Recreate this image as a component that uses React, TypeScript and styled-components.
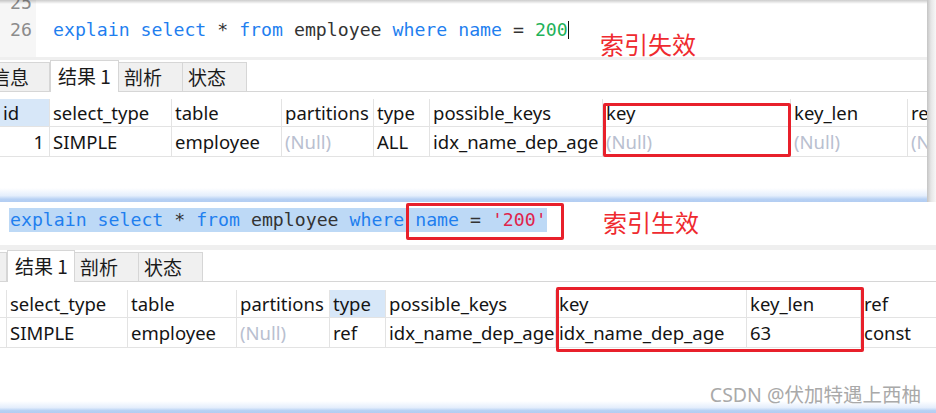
import React from 'react';
import styled, { createGlobalStyle } from 'styled-components';

const GlobalStyle = createGlobalStyle`
  html, body {
    margin: 0;
    padding: 0;
    background: #ffffff;
  }
  body {
    width: 936px;
    height: 413px;
    overflow: hidden;
  }
  * {
    box-sizing: border-box;
  }
`;

const Page = styled.div`
  width: 936px;
  height: 413px;
  display: flex;
  flex-direction: column;
  overflow: hidden;
  background: #fff;
`;

const Shot = styled.div<{ $height: number }>`
  display: flex;
  flex-shrink: 0;
  height: ${(p) => p.$height}px;
`;

const Window = styled.div`
  position: relative;
  flex: 1;
  min-width: 0;
  display: flex;
  flex-direction: column;
  overflow: hidden;
  background: #fff;
`;

const RightShade = styled.div`
  width: 9px;
  flex-shrink: 0;
  background: linear-gradient(to right, #c4c4c4, #e6e6e6 45%, #f7f7f7);
`;

const Glow = styled.div<{ $height: number }>`
  margin-top: auto;
  height: ${(p) => p.$height}px;
  flex-shrink: 0;
  background: linear-gradient(
    to bottom,
    rgba(183, 209, 244, 0) 0%,
    #e4eefc 55%,
    #b7d1f4 80%,
    #b3cdf2 100%
  );
`;

/* editor */

const Editor = styled.div<{ $height: number; $shade?: boolean }>`
  position: relative;
  display: flex;
  height: ${(p) => p.$height}px;
  flex-shrink: 0;
  overflow: hidden;
  font-family: 'DejaVu Sans Mono', 'Liberation Mono', monospace;
  font-size: 18.2px;

  &::after {
    content: '';
    display: ${(p) => (p.$shade ? 'block' : 'none')};
    position: absolute;
    left: 0;
    right: 0;
    top: 0;
    height: 4px;
    background: linear-gradient(rgba(0, 0, 0, 0.2), rgba(0, 0, 0, 0));
  }
`;

const Gutter = styled.div`
  width: 36px;
  flex-shrink: 0;
  background: #f6f6f6;
  color: #8c8c8c;
  text-align: right;
  padding-right: 4px;
`;

const Lines = styled.div<{ $shift: number; $pad: number }>`
  flex: 1;
  margin-top: ${(p) => p.$shift}px;
  padding-left: ${(p) => p.$pad}px;
  white-space: pre;
`;

const GutterLines = styled.div<{ $shift: number }>`
  margin-top: ${(p) => p.$shift}px;
`;

const Line = styled.div<{ $height: number }>`
  height: ${(p) => p.$height}px;
  line-height: ${(p) => p.$height}px;
`;

const Selection = styled.span`
  display: inline-block;
  height: 24px;
  line-height: 24px;
  padding-left: 1px;
  background: #bdd9f6;
`;

type TokenKind = 'kw' | 'id' | 'op' | 'num' | 'str';

const tokenColor: Record<TokenKind, string> = {
  kw: '#1f7fef',
  id: '#333333',
  op: '#333333',
  num: '#1fb25a',
  str: '#e0244c',
};

const Tok = styled.span<{ $kind: TokenKind }>`
  color: ${(p) => tokenColor[p.$kind]};
`;

const Caret = styled.span`
  display: inline-block;
  width: 1px;
  height: 18px;
  background: #111;
  vertical-align: -3px;
`;

const Band = styled.div<{ $height: number }>`
  height: ${(p) => p.$height}px;
  flex-shrink: 0;
  background: #efefef;
`;

/* tabs */

const TabBar = styled.div<{ $lead: number }>`
  display: flex;
  align-items: flex-end;
  height: 32px;
  flex-shrink: 0;
  border-bottom: 1px solid #d6d6d6;
  font-family: 'Noto Sans CJK SC', 'Noto Sans', sans-serif;
  font-size: 19px;
  color: #1a1a1a;

  & > :first-child {
    margin-left: ${(p) => p.$lead}px;
  }
`;

const Tab = styled.div<{ $active?: boolean; $width: number }>`
  width: ${(p) => p.$width}px;
  flex-shrink: 0;
  height: ${(p) => (p.$active ? 32 : 29)}px;
  margin-bottom: ${(p) => (p.$active ? -1 : 0)}px;
  padding-left: ${(p) => (p.$active ? 7 : 5)}px;
  line-height: ${(p) => (p.$active ? 29 : 27)}px;
  border: 1px solid #d6d6d6;
  border-bottom: 0;
  border-left-width: ${(p) => (p.$active ? 1 : 0)}px;
  background: ${(p) => (p.$active ? '#ffffff' : '#f0f0f0')};
  white-space: nowrap;
  overflow: hidden;
`;

/* result grid */

const Grid = styled.div<{ $cols: string; $offset: number; $gap: number }>`
  display: grid;
  grid-template-columns: ${(p) => p.$cols};
  margin-left: ${(p) => p.$offset}px;
  margin-top: ${(p) => p.$gap}px;
  font-family: 'Noto Sans', 'Noto Sans CJK SC', sans-serif;
  font-size: 18.5px;
  color: #141414;
`;

const HeadCell = styled.div<{ $selected?: boolean }>`
  height: 28px;
  line-height: 28px;
  padding: 0 3px;
  border-right: 1px solid #e3e3e3;
  border-bottom: 1px solid #e3e3e3;
  background: ${(p) => (p.$selected ? '#d7e7f8' : '#ffffff')};
  white-space: nowrap;
  overflow: hidden;
`;

const Cell = styled.div<{ $muted?: boolean; $right?: boolean }>`
  height: 30px;
  line-height: 30px;
  padding: 0 ${(p) => (p.$right ? 5 : 3)}px 0 3px;
  border-right: 1px solid #e3e3e3;
  border-bottom: 1px solid #e3e3e3;
  color: ${(p) => (p.$muted ? '#b9c0d0' : '#141414')};
  text-align: ${(p) => (p.$right ? 'right' : 'left')};
  white-space: nowrap;
  overflow: hidden;
`;

/* annotations */

const Note = styled.div<{ $left: number; $top: number }>`
  position: absolute;
  left: ${(p) => p.$left}px;
  top: ${(p) => p.$top}px;
  font-family: 'Noto Sans CJK SC', sans-serif;
  font-size: 24px;
  line-height: 1;
  color: #ef2a2f;
  white-space: nowrap;
`;

const RedBox = styled.div<{ $left: number; $top: number; $width: number; $height: number }>`
  position: absolute;
  left: ${(p) => p.$left}px;
  top: ${(p) => p.$top}px;
  width: ${(p) => p.$width}px;
  height: ${(p) => p.$height}px;
  border: 3px solid #e8202b;
  border-radius: 2px;
`;

const Watermark = styled.div`
  position: absolute;
  right: 15px;
  bottom: 9px;
  font-family: 'Noto Sans', 'Noto Sans CJK SC', sans-serif;
  font-size: 19.5px;
  line-height: 1;
  color: #a9a9a9;
  white-space: nowrap;
`;

type Val = { text: string; muted?: boolean; right?: boolean };

const columns = [
  'id',
  'select_type',
  'table',
  'partitions',
  'type',
  'possible_keys',
  'key',
  'key_len',
  'ref',
];

const ResultGrid: React.FC<{
  cols: string;
  offset: number;
  gap: number;
  selected: string;
  values: Val[];
  headNames?: string[];
}> = ({ cols, offset, gap, selected, values, headNames }) => (
  <Grid $cols={cols} $offset={offset} $gap={gap}>
    {columns.map((c, i) => (
      <HeadCell key={c} $selected={c === selected}>
        {headNames ? headNames[i] : c}
      </HeadCell>
    ))}
    {values.map((v, i) => (
      <Cell key={i} $muted={v.muted} $right={v.right}>
        {v.text}
      </Cell>
    ))}
  </Grid>
);

const Tabs: React.FC<{ lead: number; firstWidth: number }> = ({ lead, firstWidth }) => (
  <TabBar $lead={lead}>
    <Tab $width={64}>信息</Tab>
    <Tab $width={firstWidth} $active>
      结果 1
    </Tab>
    <Tab $width={64}>剖析</Tab>
    <Tab $width={64}>状态</Tab>
  </TabBar>
);

const App: React.FC = () => (
  <Page>
    <GlobalStyle />

    {/* first capture: number compared to a varchar column */}
    <Shot $height={202}>
      <Window>
        <Editor $height={57} $shade>
          <Gutter>
            <GutterLines $shift={-11}>
              <Line $height={27}>25</Line>
              <Line $height={27}>26</Line>
            </GutterLines>
          </Gutter>
          <Lines $shift={-11} $pad={17}>
            <Line $height={27}> </Line>
            <Line $height={27}>
              <Tok $kind="kw">explain</Tok> <Tok $kind="kw">select</Tok>{' '}
              <Tok $kind="op">*</Tok> <Tok $kind="kw">from</Tok>{' '}
              <Tok $kind="id">employee</Tok> <Tok $kind="kw">where</Tok>{' '}
              <Tok $kind="kw">name</Tok> <Tok $kind="op">=</Tok>{' '}
              <Tok $kind="num">200</Tok>
              <Caret />
            </Line>
          </Lines>
        </Editor>
        <Band $height={3} />
        <Tabs lead={-14} firstWidth={69} />
        <ResultGrid
          cols="50px 122px 110px 92px 56px 173px 188px 117px 100px"
          offset={0}
          gap={7}
          selected="id"
          headNames={['id', 'select_type', 'table', 'partitions', 'type', 'possible_keys', 'key', 'key_len', 're']}
          values={[
            { text: '1', right: true },
            { text: 'SIMPLE' },
            { text: 'employee' },
            { text: '(Null)', muted: true },
            { text: 'ALL' },
            { text: 'idx_name_dep_age' },
            { text: '(Null)', muted: true },
            { text: '(Null)', muted: true },
            { text: '(N', muted: true },
          ]}
        />
        <Glow $height={14} />

        <Note $left={600} $top={32}>
          索引失效
        </Note>
        <RedBox $left={603} $top={103} $width={188} $height={54} />
      </Window>
      <RightShade />
    </Shot>

    {/* second capture: string literal, index used */}
    <Shot $height={211}>
      <Window>
        <Editor $height={43}>
          <Lines $shift={6} $pad={9}>
            <Line $height={24}>
              <Selection>
                <Tok $kind="kw">explain</Tok> <Tok $kind="kw">select</Tok>{' '}
                <Tok $kind="op">*</Tok> <Tok $kind="kw">from</Tok>{' '}
                <Tok $kind="id">employee</Tok> <Tok $kind="kw">where</Tok>{' '}
                <Tok $kind="kw">name</Tok> <Tok $kind="op">=</Tok>{' '}
                <Tok $kind="str">'200'</Tok>
              </Selection>
            </Line>
          </Lines>
        </Editor>
        <Band $height={5} />
        <Tabs lead={-57} firstWidth={68} />
        <ResultGrid
          cols="50px 121px 109px 93px 56px 170px 191px 114px 100px"
          offset={-43}
          gap={8}
          selected="type"
          values={[
            { text: '1', right: true },
            { text: 'SIMPLE' },
            { text: 'employee' },
            { text: '(Null)', muted: true },
            { text: 'ref' },
            { text: 'idx_name_dep_age' },
            { text: 'idx_name_dep_age' },
            { text: '63' },
            { text: 'const' },
          ]}
        />
        <Glow $height={12} />

        <Note $left={603} $top={8}>
          索引生效
        </Note>
        <RedBox $left={406} $top={1} $width={158} $height={37} />
        <RedBox $left={556} $top={85} $width={308} $height={65} />
        <Watermark>CSDN @伏加特遇上西柚</Watermark>
      </Window>
    </Shot>
  </Page>
);

export default App;
